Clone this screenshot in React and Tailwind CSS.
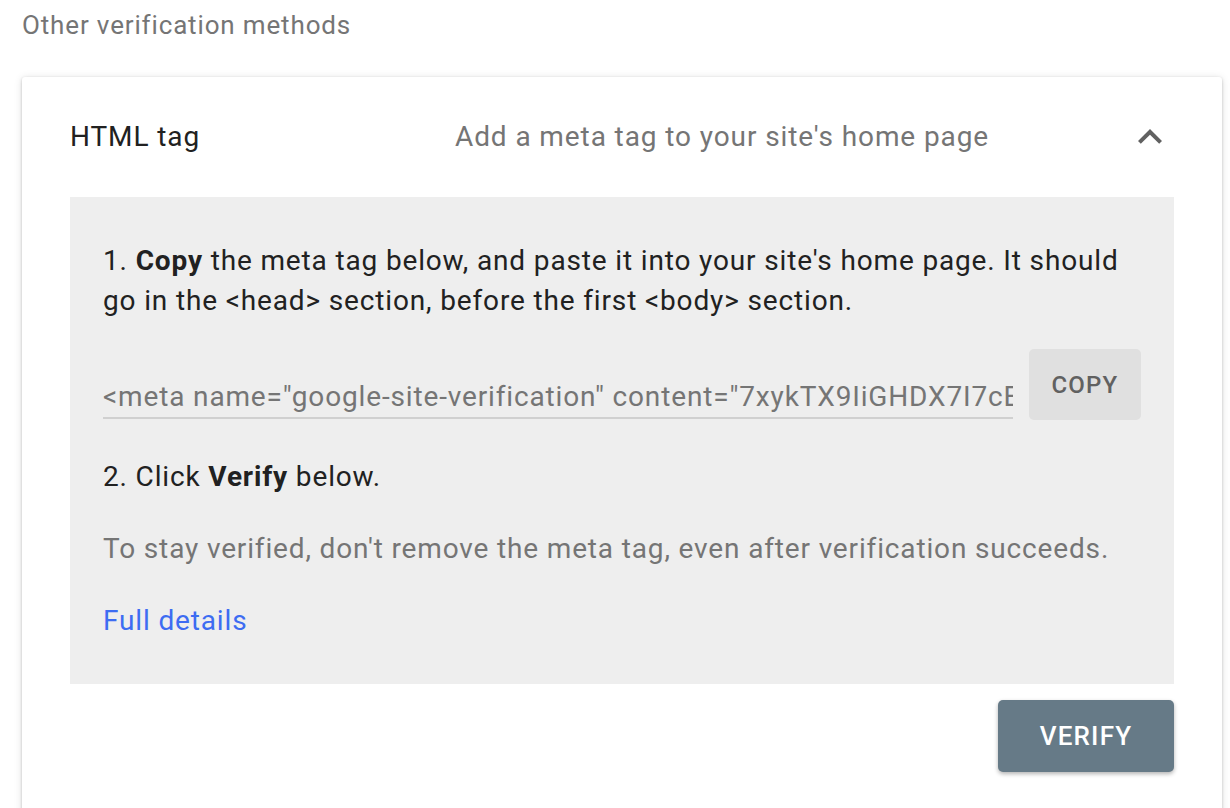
import React from "react";

export default function App() {
  return (
    <div className="min-h-screen bg-white font-['Roboto','Liberation_Sans',sans-serif]">
      <div className="pl-[22px] pt-[9px] text-[26px] leading-[32px] tracking-[0.85px] text-[#757575]">
        Other verification methods
      </div>
      <div className="ml-[22px] mr-[8px] mt-[36px] rounded-[3px] bg-white shadow-[0_1px_3px_rgba(0,0,0,0.2),0_1px_8px_rgba(0,0,0,0.12)] pb-[48px]">
        <div className="flex h-[120px] items-center px-[48px] tracking-[0.9px]">
          <div className="w-[385px] text-[28px] leading-[40px] text-[#212121]">HTML tag</div>
          <div className="flex-1 text-[28px] leading-[40px] text-[#757575]">
            Add a meta tag to your site's home page
          </div>
          <div className="flex h-[48px] w-[48px] items-center justify-center">
            <svg width="48" height="48" viewBox="0 0 24 24" fill="#616161">
              <path d="M12 8l-6 6 1.41 1.41L12 10.83l4.59 4.58L18 14z" />
            </svg>
          </div>
        </div>
        <div className="mx-[48px] bg-[#eeeeee] px-[33px] pt-[44px] pb-[43px] text-[28px] leading-[40px] tracking-[0.85px]">
          <p className="text-[#212121]">
            1. <b className="font-bold">Copy</b> the meta tag below, and paste it into your site's home page. It should go in the &lt;head&gt; section, before the first &lt;body&gt; section.
          </p>
          <div className="mt-[28px] flex items-end gap-[16px]">
            <div className="mb-[1px] min-w-0 flex-1 overflow-hidden whitespace-nowrap border-b-2 border-[#d0d0d0] text-[#757575]">
              &lt;meta name="google-site-verification" content="7xykTX9IiGHDX7I7cEyKbT3r0aQ2nVbLq8sLwPz5uJk" /&gt;
            </div>
            <button className="flex h-[71px] w-[112px] shrink-0 items-center justify-center rounded-[5px] bg-[#e0e0e0] text-[24px] font-medium tracking-[1.2px] text-[#616161]">
              COPY
            </button>
          </div>
          <p className="mt-[37px] text-[#212121]">
            2. Click <b className="font-bold">Verify</b> below.
          </p>
          <p className="mt-[32px] text-[#757575]">
            To stay verified, don't remove the meta tag, even after verification succeeds.
          </p>
          <a className="mt-[32px] block text-[#3d6cf2]">Full details</a>
        </div>
        <div className="mx-[48px] mt-[16px] flex justify-end">
          <button className="flex h-[72px] w-[176px] items-center justify-center rounded-[5px] bg-[#667a87] text-[26px] font-medium tracking-[1.2px] text-white shadow-[0_2px_4px_rgba(0,0,0,0.3)]">
            VERIFY
          </button>
        </div>
      </div>
    </div>
  );
}
